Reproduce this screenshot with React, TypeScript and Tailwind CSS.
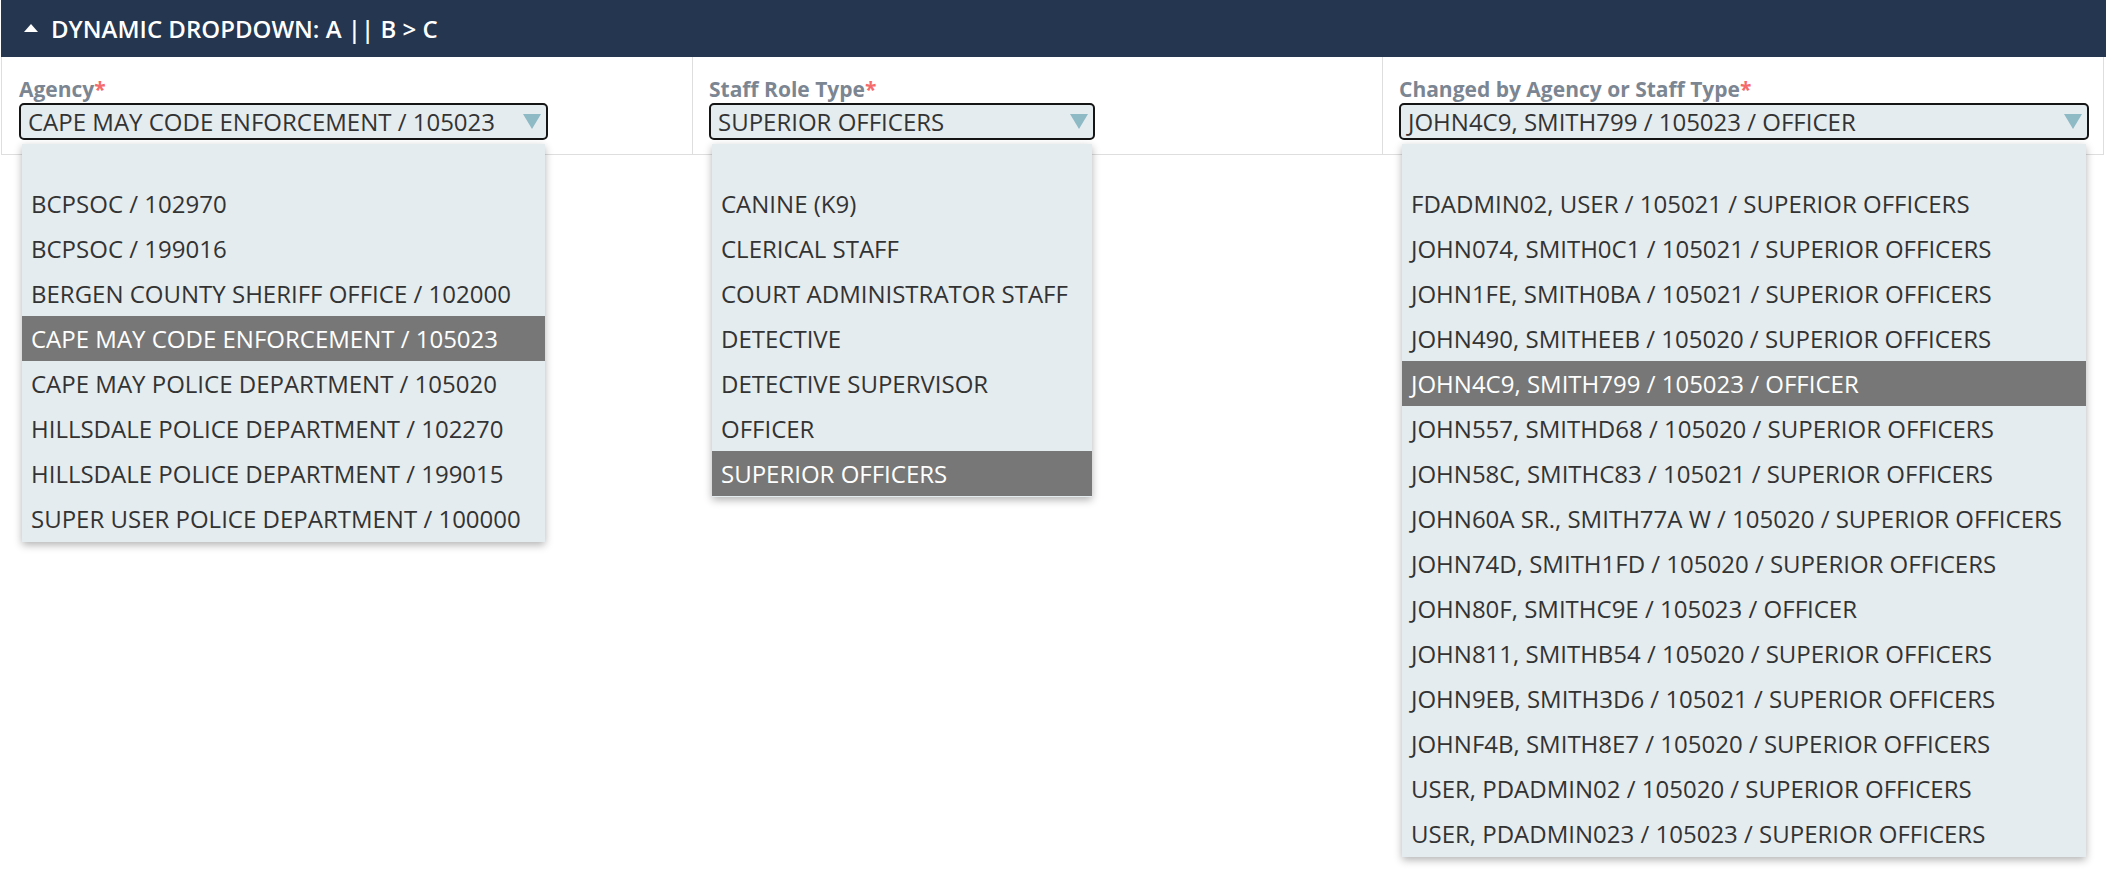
import React from "react";

type DropProps = {
  label: string;
  value: string;
  width: number;
  options: string[];
  selected: string;
};

const agencies = [
  "BCPSOC / 102970",
  "BCPSOC / 199016",
  "BERGEN COUNTY SHERIFF OFFICE / 102000",
  "CAPE MAY CODE ENFORCEMENT / 105023",
  "CAPE MAY POLICE DEPARTMENT / 105020",
  "HILLSDALE POLICE DEPARTMENT / 102270",
  "HILLSDALE POLICE DEPARTMENT / 199015",
  "SUPER USER POLICE DEPARTMENT / 100000",
];

const roles = [
  "CANINE (K9)",
  "CLERICAL STAFF",
  "COURT ADMINISTRATOR STAFF",
  "DETECTIVE",
  "DETECTIVE SUPERVISOR",
  "OFFICER",
  "SUPERIOR OFFICERS",
];

const staff = [
  "FDADMIN02, USER / 105021 / SUPERIOR OFFICERS",
  "JOHN074, SMITH0C1 / 105021 / SUPERIOR OFFICERS",
  "JOHN1FE, SMITH0BA / 105021 / SUPERIOR OFFICERS",
  "JOHN490, SMITHEEB / 105020 / SUPERIOR OFFICERS",
  "JOHN4C9, SMITH799 / 105023 / OFFICER",
  "JOHN557, SMITHD68 / 105020 / SUPERIOR OFFICERS",
  "JOHN58C, SMITHC83 / 105021 / SUPERIOR OFFICERS",
  "JOHN60A SR., SMITH77A W / 105020 / SUPERIOR OFFICERS",
  "JOHN74D, SMITH1FD / 105020 / SUPERIOR OFFICERS",
  "JOHN80F, SMITHC9E / 105023 / OFFICER",
  "JOHN811, SMITHB54 / 105020 / SUPERIOR OFFICERS",
  "JOHN9EB, SMITH3D6 / 105021 / SUPERIOR OFFICERS",
  "JOHNF4B, SMITH8E7 / 105020 / SUPERIOR OFFICERS",
  "USER, PDADMIN02 / 105020 / SUPERIOR OFFICERS",
  "USER, PDADMIN023 / 105023 / SUPERIOR OFFICERS",
];

function Dropdown({ label, value, width, options, selected }: DropProps) {
  return (
    <div>
      <div className="h-[28px] leading-[28px] text-[21px] font-bold text-[#7b8692]">
        {label}
        <span className="text-[#f56b6b]">*</span>
      </div>
      <div className="relative" style={{ width }}>
        {/* the select box */}
        <div className="h-[37px] flex items-center justify-between border-2 border-[#151515] rounded-[5px] bg-[#e5ecef] pl-[7px] pr-[5px]">
          <span className="text-[24px] leading-none text-[#333]">{value}</span>
          <svg width="18" height="15" viewBox="0 0 18 15">
            <polygon points="0,0 18,0 9,15" fill="#8ebac6" />
          </svg>
        </div>
        {/* open option list */}
        <div className="absolute left-[3px] right-[3px] top-[41px] bg-[#e5ecef] shadow-[0_3px_8px_rgba(0,0,0,0.3)] z-10">
          <div className="h-[37px]"></div>
          {options.map((o) => (
            <div
              key={o}
              className={
                o === selected
                  ? "h-[45px] flex items-center pl-[9px] text-[24px] leading-none whitespace-nowrap bg-[#777777] text-white"
                  : "h-[45px] flex items-center pl-[9px] text-[24px] leading-none whitespace-nowrap text-[#333]"
              }
            >
              {o}
            </div>
          ))}
          <div className="h-[1px]"></div>
        </div>
      </div>
    </div>
  );
}

export default function App() {
  return (
    <div className="w-[2106px] h-[874px] bg-white overflow-hidden font-['Open_Sans',sans-serif]">
      <div className="ml-[1px]">
        {/* section header */}
        <div className="h-[57px] bg-[#243650] flex items-center pl-[23px]">
          <svg width="14" height="8" viewBox="0 0 14 8" className="mt-[-1px]">
            <polygon points="7,0 14,8 0,8" fill="#ffffff" />
          </svg>
          <span className="ml-[13px] text-white text-[24px] font-semibold">DYNAMIC DROPDOWN: A || B &gt; C</span>
        </div>

        {/* field row */}
        <div className="flex h-[98px] border-b border-[#dedede] w-[2103px] border-r">
          <div className="w-[691px] border-l border-[#dedede] pl-[17px] pt-[18px]">
            <Dropdown
              label="Agency"
              value="CAPE MAY CODE ENFORCEMENT / 105023"
              width={529}
              options={agencies}
              selected="CAPE MAY CODE ENFORCEMENT / 105023"
            />
          </div>
          <div className="w-[690px] border-l border-[#dedede] pl-[16px] pt-[18px]">
            <Dropdown
              label="Staff Role Type"
              value="SUPERIOR OFFICERS"
              width={386}
              options={roles}
              selected="SUPERIOR OFFICERS"
            />
          </div>
          <div className="flex-1 border-l border-[#dedede] pl-[16px] pt-[18px]">
            <Dropdown
              label="Changed by Agency or Staff Type"
              value="JOHN4C9, SMITH799 / 105023 / OFFICER"
              width={690}
              options={staff}
              selected="JOHN4C9, SMITH799 / 105023 / OFFICER"
            />
          </div>
        </div>
      </div>
    </div>
  );
}
